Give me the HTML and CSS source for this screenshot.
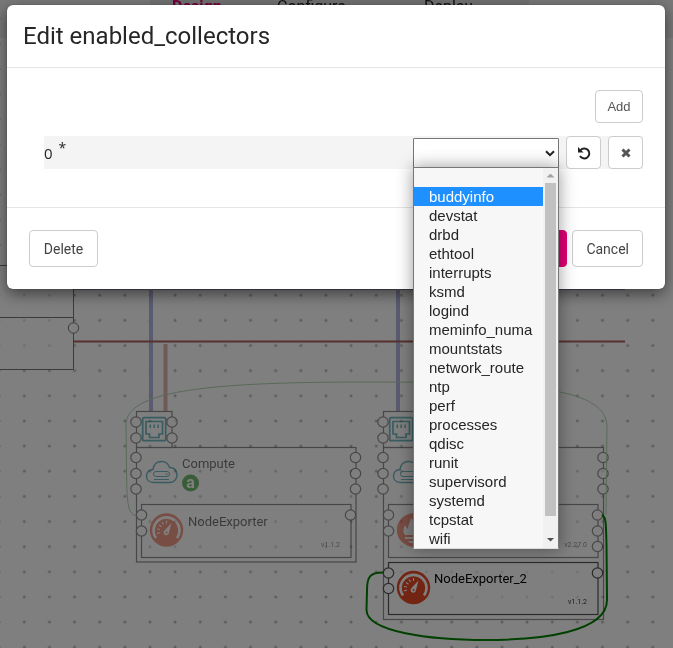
FILE: index.html
```html
<!DOCTYPE html>
<html lang="en">
<head>
<meta charset="utf-8">
<meta name="viewport" content="width=device-width, initial-scale=1">
<title>Edit enabled_collectors</title>
<link rel="stylesheet" href="styles.css">
</head>
<body>
<div class="workspace">
  <nav class="tabs">
    <a class="tab tab-active" href="#design">Design</a>
    <a class="tab" href="#configure">Configure</a>
    <a class="tab" href="#deploy">Deploy</a>
  </nav>
  <svg class="diagram" aria-hidden="true">
    <defs>
      <pattern id="dots" x="11.7" y="6.1" width="25.14" height="25.14" patternUnits="userSpaceOnUse">
        <circle cx="12.6" cy="12.6" r="1.5" fill="#b8b8b8"/>
      </pattern>
      <g id="port"><circle r="5.2"/></g>
      <g id="nic">
        <rect class="nic-shape" x="136.500" y="411.500" width="35.500" height="36"/>
        <g class="teal">
          <rect x="142.700" y="417.700" width="23" height="23" rx="1" stroke-width="1.700"/>
          <path stroke-width="1.700" d="M146 421.500h16.500v12.500h-3.500v3.500h-9.500v-3.500h-3.500z"/>
          <path stroke-width="1.500" d="M150.300 424.500v3.500M154.200 424.500v3.500M158.100 424.500v3.500"/>
        </g>
        <g class="nic-shape nic-ports">
          <use href="#port" x="136" y="422"/><use href="#port" x="136" y="438"/>
          <use href="#port" x="172" y="422"/><use href="#port" x="172" y="438"/>
        </g>
      </g>
      <g id="cloud" class="teal" stroke-width="1.500">
        <path d="M153.500 482.500C149 482.500 146.500 479.500 146.500 476C146.500 472 149.500 469.500 153 469.500C153.500 464.500 157 461.500 161.500 461.500C165.500 461.500 168.500 464 169.500 467.500C174 467 177 470.500 177 475C177 479.500 173.500 482.500 169.500 482.500Z"/>
        <rect x="153.500" y="471.500" width="16" height="5" rx="2.500" stroke-width="1"/>
        <path stroke-width="1" d="M154 479.500h15M165.500 474h2"/>
      </g>
      <g id="gauge">
        <circle r="16.700" fill="#e64a26"/>
        <path d="M-10.500 8A13 13 0 1 1 10.500 8" fill="none" stroke="#fff" stroke-width="2.600"/>
        <path d="M-9.500 3.500l3-1M-9.500-1l3 .5M-7.500-5l2.500 1.700M-4.500-8l1.500 2.500M0-9.500v3" stroke="#fff" stroke-width="1.100"/>
        <path d="M5-7L2.500 2.500A2.700 2.700 0 1 1-2 0.500Z" fill="#fff"/><circle cx="0" cy="2.500" r="1" fill="#e64a26"/>
      </g>
    </defs>
    <rect width="100%" height="100%" fill="url(#dots)"/>
    <g class="box">
      <path d="M-1 265.500H73.500V369.500H-1M-1 317.500H73.500"/>
    </g>
    <path class="line-blue" d="M73 288.500H625"/>
    <path class="link-blue" d="M151 289V411M398 289V411"/>
    <path class="link-red" d="M165.500 344V411"/>
    <path class="line-red" d="M73 341.500H625"/>
    <g class="ports"><use href="#port" x="73.500" y="328"/></g>

    <g class="muted">
      <rect class="box" x="136.500" y="447.500" width="219.500" height="114.500"/>
      <use href="#nic"/>
      <use href="#cloud"/>
      <text class="name" x="182" y="468">Compute</text>
      <circle cx="190.500" cy="483" r="8.500" fill="#008000"/>
      <text class="badge" x="190.500" y="488" text-anchor="middle">a</text>
      <rect class="box" x="141.500" y="504.500" width="209.500" height="53"/>
      <use href="#gauge" x="166.500" y="530"/>
      <text class="name" x="188" y="526">NodeExporter</text>
      <text class="version" x="340" y="547" text-anchor="end">v1.1.2</text>
      <g class="ports">
        <use href="#port" x="136" y="457.500"/><use href="#port" x="136" y="473.500"/><use href="#port" x="136" y="489"/>
        <use href="#port" x="355.500" y="457.500"/><use href="#port" x="355.500" y="473.500"/><use href="#port" x="355.500" y="489"/>
        <use href="#port" x="141.500" y="515"/><use href="#port" x="141.500" y="531"/><use href="#port" x="350.500" y="515"/>
      </g>
    </g>

    <g class="muted">
      <rect class="box" x="383.500" y="447.500" width="220" height="172"/>
      <use href="#nic" x="247"/>
      <use href="#cloud" x="247"/>
      <rect class="box" x="388.500" y="504.500" width="209.500" height="53"/>
      <circle cx="413.500" cy="530" r="16.700" fill="#e64a26"/>
      <path fill="#fff" d="M405 535c-3-4-1-7 0-10c1 2 2 3 3 4c0-4 2-7 3-11c3 3 4 7 4 11c2-1 2-3 2-5c4 4 6 8 3 11zM405 537h16v2h-16zM408 541h10c-1 3-9 3-10 0z"/>
      <text class="version" x="587" y="547" text-anchor="end">v2.27.0</text>
      <g class="ports">
        <use href="#port" x="383" y="457.500"/><use href="#port" x="383" y="473.500"/><use href="#port" x="383" y="489"/>
        <use href="#port" x="603" y="457.500"/><use href="#port" x="603" y="473.500"/><use href="#port" x="603" y="489"/>
        <use href="#port" x="388.500" y="515"/><use href="#port" x="388.500" y="531"/>
        <use href="#port" x="597.500" y="515"/><use href="#port" x="597.500" y="531"/><use href="#port" x="597.500" y="546.500"/>
      </g>
    </g>
    <path class="route-faint" d="M136 515.500C127 514 127 500 126.500 470L126 425C126 392 200 382 366 382S608 388 607 428L606 515"/>
    <path class="route" d="M384 572.500C370 572 367 577 367 590L366.500 610C367 632 430 640 486 640S607 632 607 600L606.500 545C606 522 606 517 602 515"/>
    <g class="selected">
      <rect class="box" x="388.500" y="562.500" width="209.500" height="52"/>
      <use href="#gauge" x="413.500" y="587.500"/>
      <text class="name" x="434" y="583">NodeExporter_2</text>
      <text class="version" x="587" y="604" text-anchor="end">v1.1.2</text>
      <g class="ports">
        <use href="#port" x="388.500" y="573"/><use href="#port" x="388.500" y="588.500"/><use href="#port" x="597.500" y="573"/>
      </g>
    </g>
  </svg>
</div>

<div class="backdrop">
  <section class="modal" role="dialog" aria-labelledby="dialog-title">
    <header class="modal-header"><h1 id="dialog-title">Edit enabled_collectors</h1></header>
    <div class="modal-body">
      <div class="toolbar"><button class="btn btn-plain" type="button">Add</button></div>
      <div class="entry">
        <label class="entry-label" for="collector">0 <sup>*</sup></label>
        <div class="picker">
          <select id="collector" class="picker-select"><option></option></select>
          <svg class="picker-arrow" viewBox="0 0 10 7" aria-hidden="true"><path d="M1 1.200l4 4 4-4"/></svg>
          <div class="menu">
            <ul class="menu-list" role="listbox" aria-label="Collectors">
              <li role="option"></li>
              <li role="option" class="highlighted" aria-selected="true">buddyinfo</li>
              <li role="option">devstat</li>
              <li role="option">drbd</li>
              <li role="option">ethtool</li>
              <li role="option">interrupts</li>
              <li role="option">ksmd</li>
              <li role="option">logind</li>
              <li role="option">meminfo_numa</li>
              <li role="option">mountstats</li>
              <li role="option">network_route</li>
              <li role="option">ntp</li>
              <li role="option">perf</li>
              <li role="option">processes</li>
              <li role="option">qdisc</li>
              <li role="option">runit</li>
              <li role="option">supervisord</li>
              <li role="option">systemd</li>
              <li role="option">tcpstat</li>
              <li role="option">wifi</li>
            </ul>
            <div class="scrollbar" aria-hidden="true">
              <span class="arrow arrow-up"></span>
              <span class="thumb"></span>
              <span class="arrow arrow-down"></span>
            </div>
          </div>
        </div>
        <button class="btn btn-icon" type="button" aria-label="Reset">
          <svg width="14" height="14" viewBox="0 0 14 14" aria-hidden="true"><path d="M3.500 4.200A5 5 0 1 1 3 10" fill="none" stroke="#222" stroke-width="2"/><path d="M1 1v5.500h5.500z" fill="#222"/></svg>
        </button>
        <button class="btn btn-icon" type="button" aria-label="Remove">
          <svg width="10" height="10" viewBox="0 0 10 10" aria-hidden="true"><path d="M1.500 1.500l7 7M8.500 1.500l-7 7" stroke="#555" stroke-width="3"/></svg>
        </button>
      </div>
    </div>
    <footer class="modal-footer">
      <button class="btn btn-large btn-delete" type="button">Delete</button>
      <button class="btn btn-large btn-primary" type="button">Save</button>
      <button class="btn btn-large" type="button">Cancel</button>
    </footer>
  </section>
</div>
</body>
</html>
```
FILE: styles.css
```css
* { box-sizing: border-box; }

body {
  margin: 0;
  min-height: 100vh;
  overflow: hidden;
  font-family: Roboto, "Liberation Sans", sans-serif;
  font-size: 14px;
  color: #262626;
  background: #fff;
}

.workspace {
  position: fixed;
  inset: 0;
}

.tabs {
  display: grid;
  grid-template-columns: 105px 147px 127px;
  height: 38px;
  padding-left: 150px;
  background: #f0f0f0;
}

.tab {
  padding-left: 22px;
  font-size: 16px;
  line-height: 14px;
  color: #222;
  text-decoration: none;
  background: #e2e2e2;
}

.tab-active {
  font-weight: 700;
  color: #e20074;
}

/* Topology canvas under the dialog */
.diagram {
  position: absolute;
  inset: 0;
  width: 100%;
  height: 100%;
}

.box {
  fill: rgba(255, 255, 255, 0.5);
  stroke: #777;
  stroke-width: 1;
}

.ports { fill: #fff; stroke: #777; stroke-width: 1; }
.teal { fill: none; stroke: #007f8c; }
.muted .box,
.muted .ports { stroke: #333; stroke-width: 1.2; }
.nic-shape { fill: rgba(255, 255, 255, 0.5); stroke: #333; stroke-width: 1.2; }
.nic-ports { fill: #fff; }
.muted { opacity: 0.55; }
.selected .box,
.selected .ports { stroke: #555; stroke-width: 1.2; }

.name { font-size: 13px; fill: #000; }
.version { font-size: 7px; fill: #333; }
.badge { font-size: 16px; font-weight: 700; fill: #fff; }

.line-blue { stroke: #4a4a88; stroke-width: 2; }
.line-red { stroke: #b06060; stroke-width: 2; }
.link-blue { stroke: #b5b5e0; stroke-width: 4; }
.link-red { stroke: #e0b5b0; stroke-width: 4; }
.route-faint { fill: none; stroke: #b3d4b3; stroke-width: 1; }
.route { fill: none; stroke: #008000; stroke-width: 2; }

.backdrop {
  position: relative;
  min-height: 100vh;
  padding: 5px 8px 0 7px;
  background: rgba(0, 0, 0, 0.5);
}

.modal {
  background: #fff;
  border-radius: 6px;
  box-shadow: 0 5px 15px rgba(0, 0, 0, 0.5), 0 0 1px rgba(0, 0, 0, 0.6);
}

.modal-header {
  padding: 16px;
  border-bottom: 1px solid #e5e5e5;
}

.modal-header h1 {
  margin: 0;
  font-size: 24px;
  font-weight: 400;
  line-height: 30px;
}

.modal-body {
  padding: 22px 22px 38px 37px;
}

.toolbar {
  display: flex;
  justify-content: flex-end;
  margin-bottom: 13px;
}

.entry {
  display: flex;
  align-items: center;
  gap: 7px;
  height: 33px;
  background: #f4f4f4;
}

.entry-label {
  flex: 1;
  font-family: "Open Sans", sans-serif;
  font-size: 15px;
  line-height: 16px;
}

.entry-label sup {
  margin-left: 2px;
  font-size: 14px;
  line-height: 0;
}

.picker {
  position: relative;
  width: 146px;
}

.picker-select {
  display: block;
  width: 100%;
  height: 30px;
  appearance: none;
  background: #fff;
  border: 1px solid #767676;
  border-radius: 1px;
}

.picker-arrow {
  position: absolute;
  top: 12px;
  right: 4px;
  width: 10px;
  height: 7px;
  fill: none;
  stroke: #222;
  stroke-width: 2;
}

.menu {
  position: absolute;
  top: 29px;
  left: 0;
  z-index: 2;
  display: flex;
  width: 100%;
  background: #f7f7f7;
  border: 1px solid #777;
  border-bottom-color: #ddd;
  box-shadow: 0 0 16px rgba(0, 0, 0, 0.4);
}

.menu-list {
  flex: 1;
  margin: 0;
  padding: 0;
  list-style: none;
  font-family: "Liberation Sans", Arial, sans-serif;
  font-size: 15px;
  line-height: 19px;
}

.menu-list li {
  height: 19px;
  padding-left: 15px;
}

.menu-list .highlighted {
  color: #fff;
  background: #1e90ff;
}

.scrollbar {
  display: flex;
  flex-direction: column;
  align-items: center;
  width: 15px;
  background: #f1f1f1;
}

.thumb {
  width: 11px;
  height: 333px;
  background: #c1c1c1;
}

.arrow {
  width: 8px;
  height: 4px;
  clip-path: polygon(50% 0, 100% 100%, 0 100%);
  background: #a3a3a3;
}

.arrow-up { margin: 6px 0 5px; }

.arrow-down {
  margin-top: 22px;
  clip-path: polygon(0 0, 100% 0, 50% 100%);
  background: #505050;
}

.btn {
  height: 33px;
  padding: 0 11px;
  font: 14px Roboto, sans-serif;
  color: #444;
  background: #fff;
  border: 1px solid #ccc;
  border-radius: 4px;
}

.btn-plain {
  min-width: 48px;
  font: 13px "Liberation Sans", Arial, sans-serif;
  color: #555;
}

.btn-icon {
  display: grid;
  place-items: center;
  width: 35px;
  padding: 0;
}

.btn-large {
  min-width: 69px;
  height: 37px;
  padding: 0 13px;
}

.modal-footer {
  display: flex;
  gap: 5px;
  padding: 22px;
  border-top: 1px solid #e5e5e5;
}

.btn-delete { margin-right: auto; }

.btn-primary {
  color: #fff;
  background: #e20074;
  border-color: #e20074;
}
```
